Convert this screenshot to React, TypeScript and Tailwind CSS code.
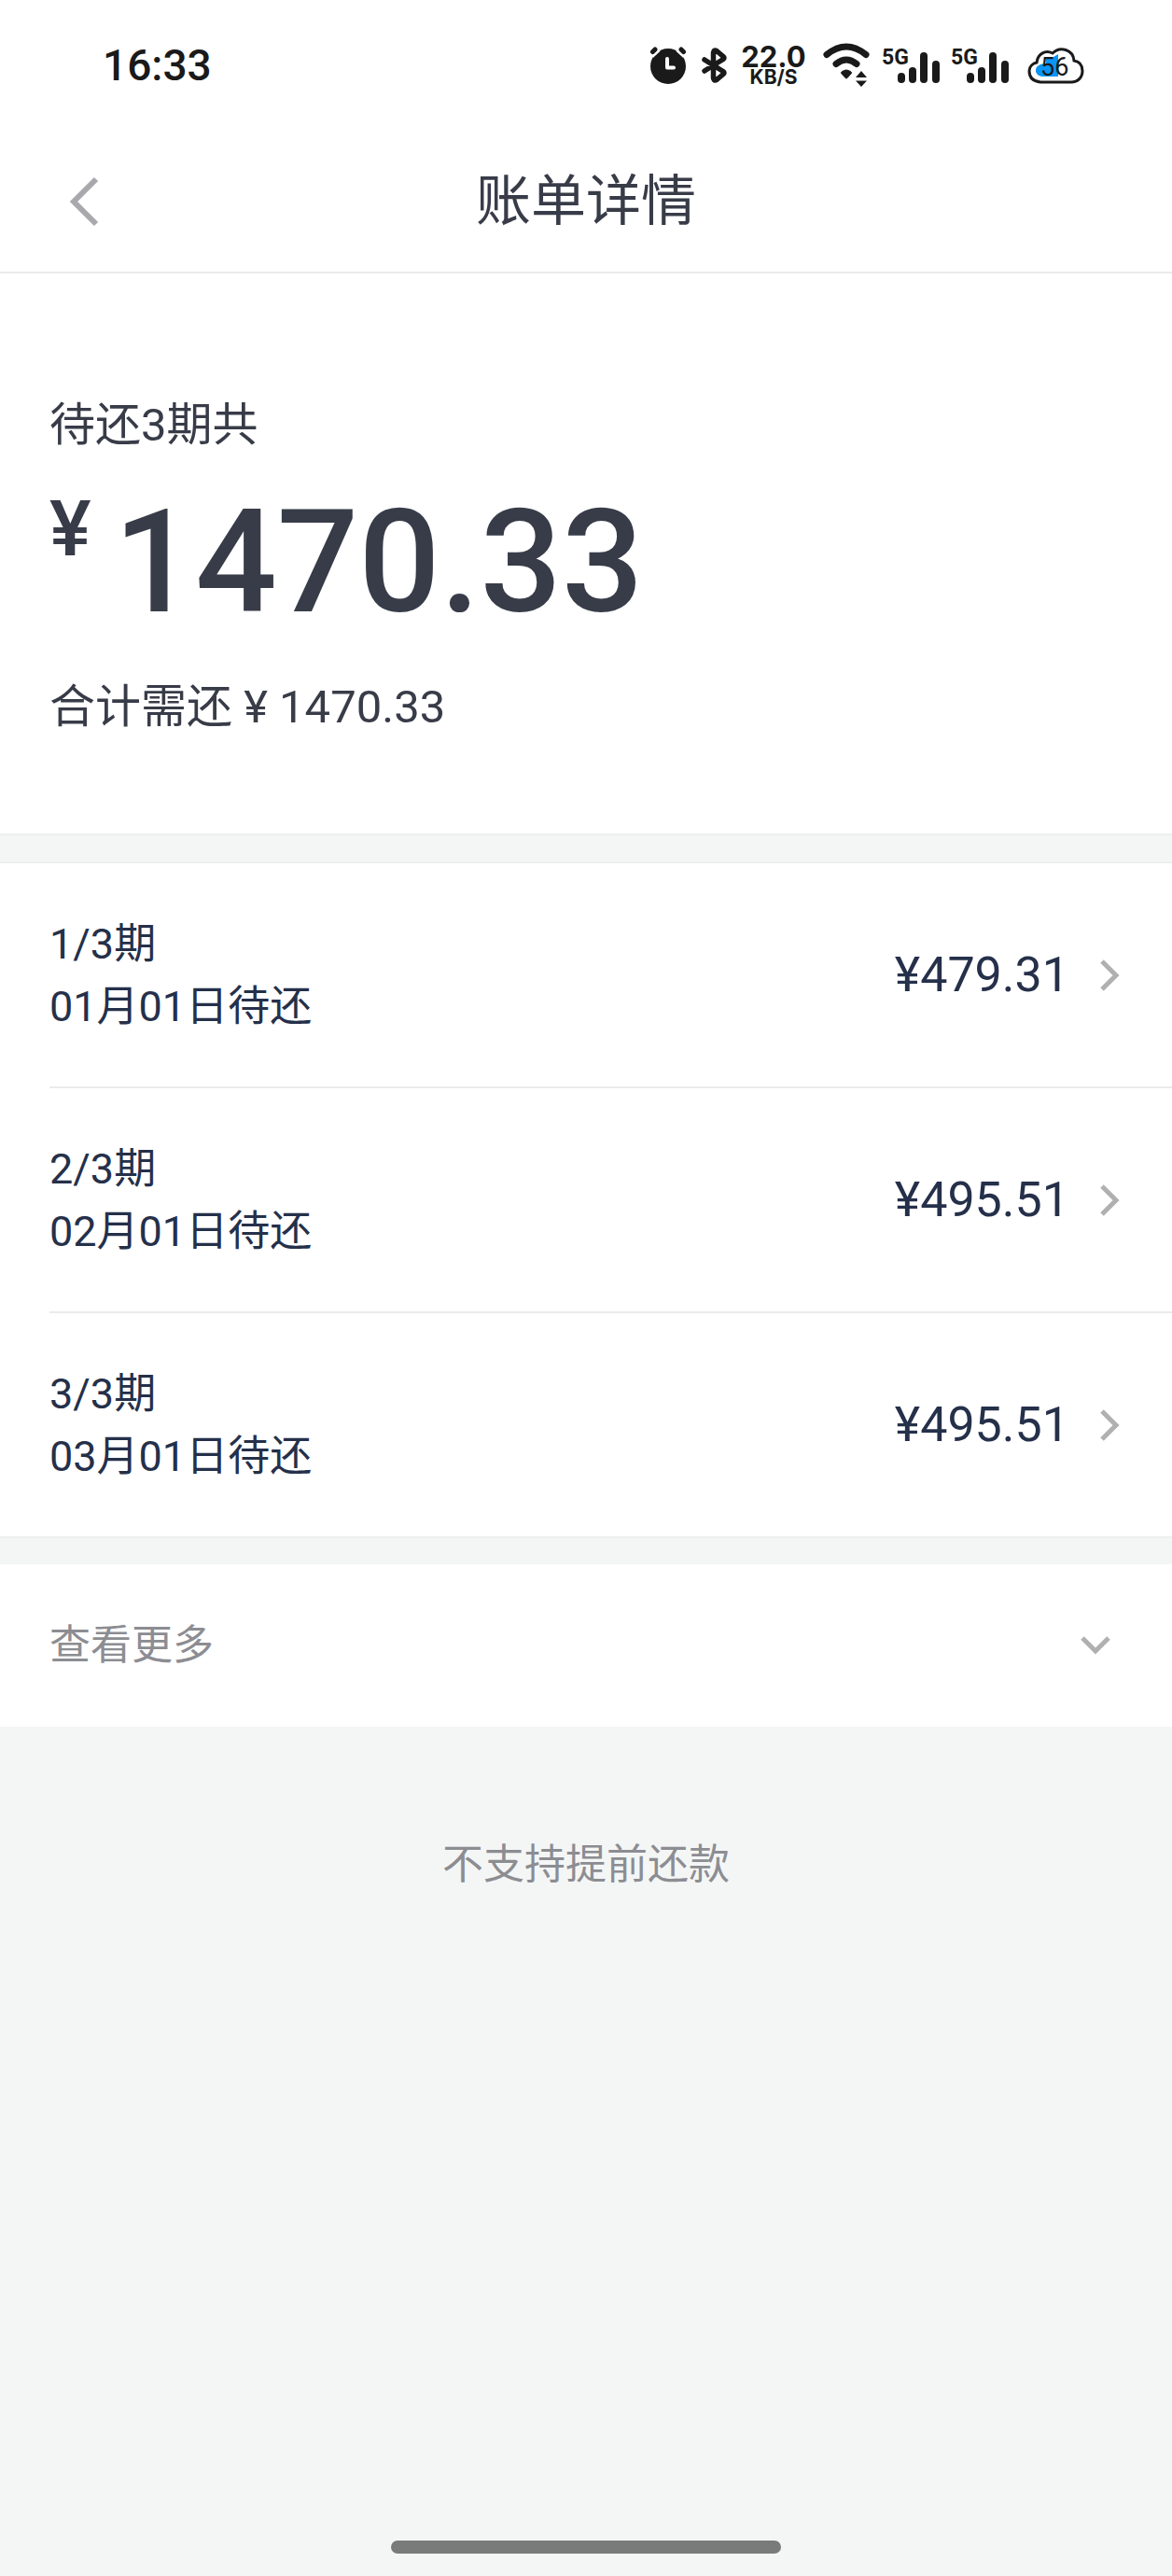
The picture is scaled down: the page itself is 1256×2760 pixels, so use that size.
type Installment = {
  period: string;
  date: string;
  amount: string;
};

const installments: Installment[] = [
  { period: "1/3期", date: "01月01日待还", amount: "¥479.31" },
  { period: "2/3期", date: "02月01日待还", amount: "¥495.51" },
  { period: "3/3期", date: "03月01日待还", amount: "¥495.51" },
];

const AlarmIcon = () => (
  <svg width="40" height="40" viewBox="0 0 40 40" fill="none" aria-hidden="true">
    <circle cx="20" cy="21" r="19" fill="#1a1a1a" />
    <path d="M1 8.500L8.500 1.500M39 8.500L31.500 1.500" stroke="#fff" strokeWidth="9" />
    <path d="M3.500 5.500l2.500-2.500M36.500 5.500l-2.500-2.500" stroke="#1a1a1a" strokeWidth="5" strokeLinecap="round" />
    <path d="M19 13v9.500h7" stroke="#fff" strokeWidth="4" strokeLinecap="round" strokeLinejoin="round" />
  </svg>
);

const BluetoothIcon = () => (
  <svg width="28" height="40" viewBox="0 0 28 40" fill="none" aria-hidden="true">
    <path
      d="M3 14l9.500 6 10.500 6.500q2 1.500 0 3l-7 6q-3 1.500-3.500-2v-27q.5-3.500 3.500-2l7 6q2 1.500 0 3L12.500 20 3 26"
      stroke="#1a1a1a"
      strokeWidth="5.500"
      strokeLinecap="round"
      strokeLinejoin="round"
    />
  </svg>
);

const WifiIcon = () => (
  <svg width="51" height="50" viewBox="0 0 51 50" fill="none" aria-hidden="true">
    <path d="M4 13.500Q25 -3.500 46 13.500" stroke="#1a1a1a" strokeWidth="7" strokeLinecap="round" />
    <path d="M14 23.500Q25 14.500 36 23.500" stroke="#1a1a1a" strokeWidth="7" strokeLinecap="round" />
    <path d="M20 32q5-4 10 0 1 1 0 2l-4 4.500q-1 1-2 0l-4-4.500q-1-1 0-2z" fill="#1a1a1a" stroke="#1a1a1a" />
    <path d="M41 31l6 7H35zM41 48l-6-6.500h12z" fill="#1a1a1a" />
  </svg>
);

const SignalIcon = () => (
  <svg width="62" height="40" viewBox="0 0 62 40" className="overflow-visible" aria-hidden="true">
    <text x="0" y="19" fontSize="23" fontWeight="700" fill="#1a1a1a">
      5G
    </text>
    <rect x="17" y="28" width="8" height="11" rx="4" fill="#1a1a1a" />
    <rect x="29" y="22" width="8" height="17" rx="4" fill="#1a1a1a" />
    <rect x="41" y="6" width="8" height="33" rx="4" fill="#1a1a1a" />
    <rect x="54" y="15" width="8" height="24" rx="4" fill="#1a1a1a" />
  </svg>
);

const BatteryIcon = () => (
  <svg width="61" height="42" viewBox="0 0 61 42" fill="none" aria-label="56%">
    <path d="M33 9v24H17c-9 0-11-10-3-13 3-1 4-1 6-1V12h8z" fill="#0a95f5" />
    <path
      d="M14 39C5 38 2 33 2 27c0-5 4-8 8-9 1-9 9-14 17-10 8-8 22-4 23 8 6 1 9 5 9 11 0 7-5 12-12 12z"
      stroke="#1a1a1a"
      strokeWidth="3"
    />
    <text x="14" y="32" fontSize="27" fill="#1a1a1a">
      56
    </text>
  </svg>
);

const StatusBar = () => (
  <div className="flex h-[140px] items-center justify-between pl-[110px] pr-[94px] text-[#1a1a1a]">
    <span className="text-[46px] font-medium leading-[52px]">16:33</span>
    <div className="flex items-center gap-3">
      <div className="flex items-center gap-4 pr-1">
        <AlarmIcon />
        <BluetoothIcon />
      </div>
      <div className="flex w-[66px] flex-col items-center font-['Inter'] font-bold">
        <span className="text-[31px] leading-[26px]">22.0</span>
        <span className="text-[21px] leading-[18px]">KB/S</span>
      </div>
      <div className="flex items-center gap-3 px-2">
        <WifiIcon />
        <SignalIcon />
        <SignalIcon />
      </div>
      <BatteryIcon />
    </div>
  </div>
);

const Header = () => (
  <header className="grid h-[153px] grid-cols-[1fr_auto_1fr] items-center border-b-2 border-[#ebebeb] px-[72px]">
    <button type="button" aria-label="返回" className="justify-self-start">
      <svg width="36" height="56" viewBox="0 0 36 56" fill="none" aria-hidden="true">
        <path d="M31 4L7 28l24 24" stroke="#a9a9ad" strokeWidth="6" />
      </svg>
    </button>
    <h1 className="text-[59px] leading-[80px]">账单详情</h1>
  </header>
);

const Summary = () => (
  <section className="border-b-2 border-[#eeefef] px-[53px] pb-[100px] pt-32">
    <p className="text-[49px] leading-[70px]">待还3期共</p>
    <p className="mt-4 flex items-start gap-6 font-medium">
      <span className="pt-3 text-[84px] leading-[96px]">¥</span>
      <span className="text-[154px] leading-[192px]">1470.33</span>
    </p>
    <p className="mt-6 text-[49px] leading-[70px]">合计需还 ¥ 1470.33</p>
  </section>
);

const InstallmentRow = ({ period, date, amount }: Installment) => (
  <li className="border-b-2 border-[#ebebeb] last:border-b-0">
    <button
      type="button"
      className="flex h-[239px] w-full items-center justify-between pr-[54px] text-left text-[#25304a]"
    >
      <span className="flex flex-col text-[45px] leading-[67px]">
        <span>{period}</span>
        <span>{date}</span>
      </span>
      <span className="flex items-center gap-8">
        <span className="text-[52px] leading-[64px]">{amount}</span>
        <svg width="24" height="36" viewBox="0 0 24 36" fill="none" aria-hidden="true">
          <path d="M3 3l15 15L3 33" stroke="#b0b0b0" strokeWidth="5" />
        </svg>
      </span>
    </button>
  </li>
);

const App = () => {
  return (
    <div className="flex min-h-screen flex-col bg-[#f4f6f6] font-['Roboto','Noto_Sans_CJK_SC',sans-serif] text-[#383c48]">
      <div className="bg-white">
        <StatusBar />
        <Header />
        <Summary />
      </div>

      <ul className="mt-7 border-y-2 border-[#eeefef] bg-white pl-[53px]">
        {installments.map((item) => (
          <InstallmentRow key={item.period} {...item} />
        ))}
      </ul>

      <button
        type="button"
        className="mt-7 flex h-[174px] w-full items-center justify-between bg-white pl-[53px] pr-[64px] text-[44px] text-[#8c8d92]"
      >
        查看更多
        <svg width="36" height="24" viewBox="0 0 36 24" fill="none" aria-hidden="true">
          <path d="M4 4l14 14L32 4" stroke="#b0b0b0" strokeWidth="5" />
        </svg>
      </button>

      <p className="mt-[116px] text-center text-[44px] leading-[64px] text-[#8c8d92]">不支持提前还款</p>

      <div className="mx-auto mb-6 mt-auto h-[14px] w-1/3 rounded-full bg-[#797b7b]" />
    </div>
  );
};

export default App;
